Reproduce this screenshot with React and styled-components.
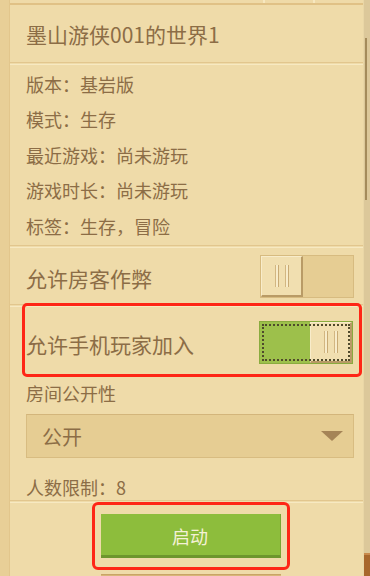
import styled, { createGlobalStyle } from "styled-components";

const GlobalStyle = createGlobalStyle`
  html, body {
    margin: 0;
    padding: 0;
    background-color: #e6cd94;
  }
  * {
    box-sizing: border-box;
  }
`;

const FONT = `"Noto Sans CJK SC", "Noto Sans", sans-serif`;

const info = [
  "版本：基岩版",
  "模式：生存",
  "最近游戏：尚未游玩",
  "游戏时长：尚未游玩",
  "标签：生存，冒险",
];

function Toggle({ on }) {
  return (
    <STToggle $on={on}>
      <STKnob $on={on}>
        <STGrip />
        <STGrip />
      </STKnob>
    </STToggle>
  );
}

export default function App() {
  return (
    <>
      <GlobalStyle />
      <STPage>
        <STLeftStrip />
        <STPanel>
          <STTopEdge>
            <STTopTick $left={253} />
            <STTopTick $left={303} />
          </STTopEdge>
          <STTitle>墨山游侠001的世界1</STTitle>
          <STDivider />
          <STInfoList>
            {info.map((line) => (
              <STInfoRow key={line}>{line}</STInfoRow>
            ))}
          </STInfoList>
          <STDivider />
          <STSwitchRow>
            <STSwitchLabel>允许房客作弊</STSwitchLabel>
            <Toggle on={false} />
          </STSwitchRow>
          <STDivider />
          <STHighlightRow>
            <STSwitchLabel>允许手机玩家加入</STSwitchLabel>
            <Toggle on />
          </STHighlightRow>
          <STSection>
            <STSmallLabel>房间公开性</STSmallLabel>
            <STSelect>
              <span>公开</span>
              <STCaret />
            </STSelect>
            <STSmallLabel $top={18}>人数限制：8</STSmallLabel>
          </STSection>
          <STDivider />
          <STFooter>
            <STButtonFrame>
              <STStartButton>启动</STStartButton>
            </STButtonFrame>
            <STNextButton />
          </STFooter>
        </STPanel>
        <STRightRail>
          <STScrollThumb />
          <STRailBottom />
        </STRightRail>
      </STPage>
    </>
  );
}

const STPage = styled.div`
  display: flex;
  width: 370px;
  height: 576px;
  overflow: hidden;
  font-family: ${FONT};
  color: #8c6d46;
`;

const STLeftStrip = styled.div`
  width: 10px;
  flex-shrink: 0;
  background-color: #e8cf97;
  border-right: 1px solid #e2c68c;
`;

const STPanel = styled.div`
  flex: 1;
  display: flex;
  flex-direction: column;
  background-color: #efdba9;

  & > * {
    flex-shrink: 0;
  }
`;

const STTopEdge = styled.div`
  position: relative;
  height: 5px;
  background-color: #efdaa8;
  border-bottom: 2px solid #e0c186;
`;

const STTopTick = styled.div`
  position: absolute;
  top: 0;
  left: ${(p) => p.$left}px;
  width: 2px;
  height: 3px;
  background-color: #f7e8c0;
`;

const STTitle = styled.div`
  height: 57px;
  display: flex;
  align-items: center;
  padding-left: 16px;
  font-size: 21px;
`;

const STDivider = styled.div`
  height: 3px;
  border-top: 1px solid #e2c68e;
  border-bottom: 1px solid #f7e9c2;
  background-color: #efdba9;
`;

const STInfoList = styled.div`
  display: flex;
  flex-direction: column;
  height: 180px;
  padding-top: 1px;
`;

const STInfoRow = styled.div`
  height: 35.5px;
  display: flex;
  align-items: center;
  padding-left: 16px;
  font-size: 18px;
`;

const STSwitchRow = styled.div`
  height: 56px;
  display: flex;
  align-items: center;
  justify-content: space-between;
  padding: 0 9px 0 16px;
`;

const STHighlightRow = styled.div`
  height: 74px;
  margin: -4px 1px 0 12px;
  display: flex;
  align-items: center;
  justify-content: space-between;
  padding: 4px 6px 0 1px;
  border: 3px solid #fe2616;
  border-radius: 5px;
`;

const STSwitchLabel = styled.div`
  font-size: 21px;
  padding-top: 3px;
`;

const STToggle = styled.div`
  width: 94px;
  height: 43px;
  display: flex;
  justify-content: ${(p) => (p.$on ? "flex-end" : "flex-start")};
  background-color: ${(p) => (p.$on ? "#9dc04b" : "#e6cd93")};
  border: 1px solid ${(p) => (p.$on ? "#8aab3e" : "#d7bb80")};
  outline: ${(p) => (p.$on ? "2px dotted #4f4a2c" : "none")};
  outline-offset: -5px;
`;

const STKnob = styled.div`
  width: 42px;
  height: 100%;
  display: flex;
  align-items: center;
  justify-content: center;
  gap: 6px;
  background-color: #f1dfb0;
  border-top: 1px solid #f8ecca;
  border-left: 1px solid #f8ecca;
  border-right: 2px solid #b99b66;
  border-bottom: 2px solid #b99b66;
`;

const STGrip = styled.div`
  width: 4px;
  height: 22px;
  background-color: #f8ecca;
  border-left: 1px solid #d2b681;
  border-right: 1px solid #c8aa74;
`;

const STSection = styled.div`
  display: flex;
  flex-direction: column;
  padding: 5px 9px 2px 16px;
`;

const STSmallLabel = styled.div`
  font-size: 18px;
  line-height: 22px;
  margin-top: ${(p) => p.$top || 0}px;
`;

const STSelect = styled.div`
  margin-top: 10px;
  height: 44px;
  display: flex;
  align-items: center;
  justify-content: space-between;
  padding: 0 10px 0 15px;
  font-size: 20px;
  background-color: #e6cd93;
  border: 1px solid #d8bc81;
  border-top-color: #d3b57b;
`;

const STCaret = styled.div`
  width: 0;
  height: 0;
  border-left: 11px solid transparent;
  border-right: 11px solid transparent;
  border-top: 10px solid #a58457;
`;

const STFooter = styled.div`
  display: flex;
  flex-direction: column;
  align-items: center;
  padding-left: 8px;
`;

const STButtonFrame = styled.div`
  margin-top: -1px;
  padding: 9px 6px;
  border: 3px solid #fe2616;
  border-radius: 6px;
`;

const STStartButton = styled.button`
  width: 180px;
  height: 44px;
  display: flex;
  align-items: center;
  justify-content: center;
  background-color: #8dbd3c;
  border: none;
  border-bottom: 3px solid #6d962d;
  border-right: 1px solid #7aa733;
  color: #f4f1d6;
  font-family: ${FONT};
  font-size: 18px;
  padding: 2px 0 0;
`;

const STNextButton = styled.div`
  width: 180px;
  height: 4px;
  margin-top: 4px;
  background-color: #d7b678;
  border-top: 1px solid #c9a466;
`;

const STRightRail = styled.div`
  position: relative;
  width: 7px;
  flex-shrink: 0;
  display: flex;
  flex-direction: column;
  justify-content: flex-end;
  background-color: #dcc89a;
  border-left: 1px solid #e9d6a6;
`;

const STScrollThumb = styled.div`
  position: absolute;
  top: 38px;
  left: 1px;
  width: 2px;
  height: 162px;
  background-color: #a48b5b;
`;

const STRailBottom = styled.div`
  height: 23px;
  background-color: #a8672c;
  border-top: 2px solid #c98a4c;
`;
